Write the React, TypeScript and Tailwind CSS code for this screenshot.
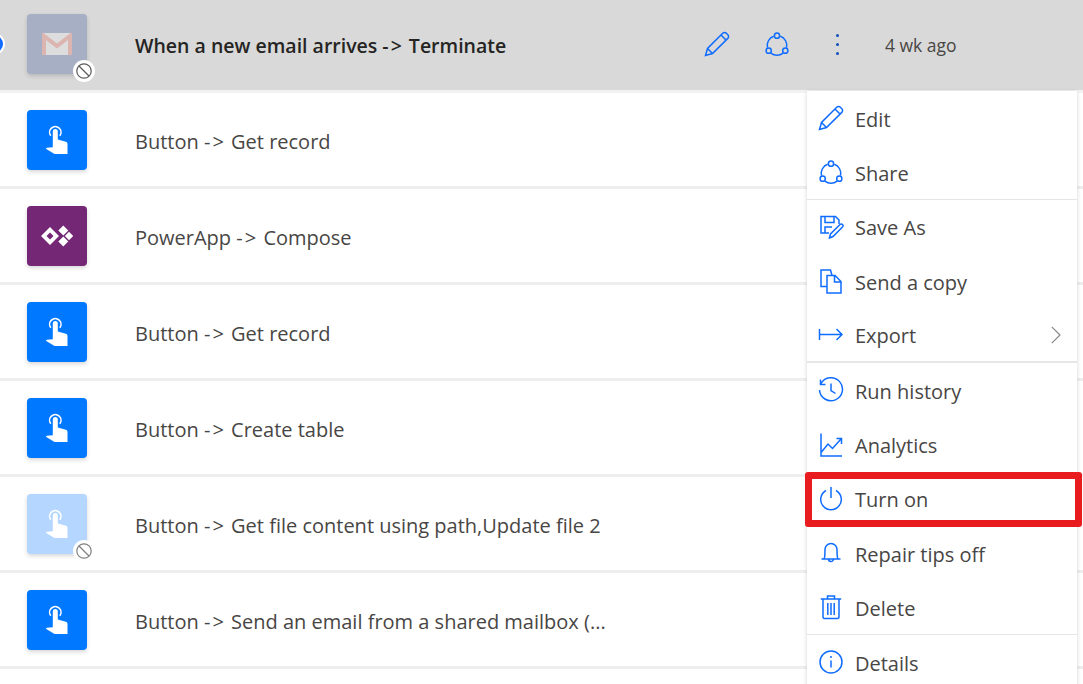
import React from 'react';

const font = "font-['Open_Sans','Noto_Sans',sans-serif]";

const HandIcon = () => (
  <svg width="22" height="30" viewBox="0 0 22 30">
    <path d="M4.800 10.800A5.700 5.700 0 1 1 13.800 10.800" fill="none" stroke="#fff" strokeWidth="1.600" />
    <path
      d="M6.800 6.500a2.500 2.500 0 0 1 5 0v8l8 2.300c1 .3 1.700 1.100 1.700 2.200V29H8.500L.3 24c-.5-.4-.2-1.200.5-1.300l6-.4z"
      fill="#fff"
    />
  </svg>
);

const PowerAppIcon = () => (
  <svg width="34" height="24" viewBox="0 0 34 24" fill="#fff">
    <path fillRule="evenodd" d="M10 3l9 9-9 9-9-9zm0 5.500L6.500 12l3.500 3.500 3.500-3.500z" />
    <path d="M23.300 1.500l5 5-5 5-5-5zM29 7.800l4.200 4.200-4.200 4.200-4.200-4.200zM23.300 12.500l5 5-5 5-5-5z" />
  </svg>
);

const GmailIcon = () => (
  <svg width="30" height="22" viewBox="0 0 30 22">
    <rect x="0" y="0" width="30" height="22" fill="#dddddd" />
    <path d="M2 22V3L15 13 28 3v19" fill="none" stroke="#dcb4b0" strokeWidth="4" />
  </svg>
);

const BanBadge = ({ muted }: { muted?: boolean }) => (
  <span className="absolute left-[46px] top-[46px] flex h-[22px] w-[22px] items-center justify-center rounded-full bg-white">
    <svg width="18" height="18" viewBox="0 0 18 18" fill="none" stroke={muted ? '#808080' : '#5a5a5a'} strokeWidth="1.200">
      <circle cx="9" cy="9" r="7.200" />
      <path d="M4 4l10 10" />
    </svg>
  </span>
);

const blue = '#0f6cff';

const Glyph = ({ children }: { children: React.ReactNode }) => (
  <svg width="26" height="26" viewBox="0 0 26 26" fill="none" stroke={blue} strokeWidth="1.500">
    {children}
  </svg>
);

const Pencil = () => (
  <Glyph>
    <path d="M1.500 24.500l2-7L18.700 2.300a2.600 2.600 0 0 1 3.700 0l1.400 1.400a2.600 2.600 0 0 1 0 3.700L8.500 22.500zM3.500 17.500l5 5M17 4l5 5" />
  </Glyph>
);

const Share = () => (
  <Glyph>
    <circle cx="13" cy="4.700" r="2.600" />
    <circle cx="4.700" cy="19.700" r="2.600" />
    <circle cx="21.300" cy="19.700" r="2.600" />
    <path d="M9.730 5.260A9.800 9.800 0 0 0 3.430 16.620M16.270 5.260A9.800 9.800 0 0 1 22.570 16.620M6.900 22.170A9.800 9.800 0 0 0 19.100 22.170" />
  </Glyph>
);

const menuItems: { label: string; icon: React.ReactNode; chevron?: boolean; divider?: boolean; thick?: boolean }[] = [
  { label: 'Edit', icon: <Pencil /> },
  { label: 'Share', icon: <Share />, divider: true },
  {
    label: 'Save As',
    icon: (
      <Glyph>
        <path d="M11 19H3V2.500h14.500L21 6v4" />
        <path d="M7 2.500v6h9v-6M7 19v-6h7" />
        <path d="M11.500 24l1-4 9.500-9.500a1.700 1.700 0 0 1 2.500 2.500L15 22.500z" />
      </Glyph>
    ),
  },
  {
    label: 'Send a copy',
    icon: (
      <Glyph>
        <path d="M9 18.500H3V2h9.500l1.500 5.500" />
        <path d="M9 7.500h8l6 6v11.500H9zM16.500 7.500v6.500h6.500" />
      </Glyph>
    ),
  },
  {
    label: 'Export',
    chevron: true,
    divider: true,
    thick: true,
    icon: (
      <Glyph>
        <path d="M1.500 7v11M1.500 12.500h22.500M18.500 7l5.500 5.500-5.500 5.500" />
      </Glyph>
    ),
  },
  {
    label: 'Run history',
    icon: (
      <Glyph>
        <path d="M3 6.500a11.500 11.500 0 1 1-1.500 6.500M2.500 2.500v5h5M13 6.500v7l4.500 3" />
      </Glyph>
    ),
  },
  {
    label: 'Analytics',
    icon: (
      <Glyph>
        <path d="M3 1.500v22.500h21M3.500 20l6.500-8 4.500 4.500 8.500-9.500M18.500 6.500h5V12" />
      </Glyph>
    ),
  },
  {
    label: 'Turn on',
    icon: (
      <Glyph>
        <path d="M8 4.500a10.300 10.300 0 1 0 10 0M13 1v11" />
      </Glyph>
    ),
  },
  {
    label: 'Repair tips off',
    icon: (
      <Glyph>
        <path d="M3.500 19h19M6 19c.8-1 1-3 1-9.500a6 6 0 0 1 12 0c0 6.500.2 8.500 1 9.500M10.500 19a2.500 2.500 0 0 0 5 0" />
      </Glyph>
    ),
  },
  {
    label: 'Delete',
    divider: true,
    icon: (
      <Glyph>
        <path d="M2.800 5h20.400M5 5v18a1.500 1.500 0 0 0 1.500 1.500h13A1.500 1.500 0 0 0 21 23V5M9.500 5V2h7v3M9.800 9v12M13 9v12M16.200 9v12" />
      </Glyph>
    ),
  },
  {
    label: 'Details',
    icon: (
      <Glyph>
        <circle cx="13" cy="13" r="11" />
        <path d="M13 11.500v7M13 7v2" />
      </Glyph>
    ),
  },
];

const rows = [
  { from: 'Button', to: 'Get record', kind: 'button' },
  { from: 'PowerApp', to: 'Compose', kind: 'power' },
  { from: 'Button', to: 'Get record', kind: 'button' },
  { from: 'Button', to: 'Create table', kind: 'button' },
  { from: 'Button', to: 'Get file content using path,Update file 2', kind: 'off' },
  { from: 'Button', to: 'Send an email from a shared mailbox (...', kind: 'button' },
];

// the arrow is wider in the reference font
const Arrow = () => <span className="tracking-[2px]">-&gt;</span>;

const FlowRow = ({ from, to, kind }: { from: string; to: string; kind: string }) => (
  <div className="flex h-[96px] shrink-0 items-center border-b-[3px] border-[#eeeeee] bg-white pl-[27px]">
    <div
      className={`relative flex h-[60px] w-[60px] items-center justify-center rounded-[4px] shadow-[0_2px_4px_rgba(0,0,0,0.16)] ${
        kind === 'power' ? 'bg-[#742774]' : kind === 'off' ? 'bg-[#b5d6ff]' : 'bg-[#0078ff]'
      }`}
    >
      {kind === 'power' ? <PowerAppIcon /> : <HandIcon />}
      {kind === 'off' && <BanBadge muted />}
    </div>
    <span className="ml-[48px] pt-1 text-[20px] text-[#484644]">
      {from} <Arrow /> {to}
    </span>
  </div>
);

export default function App() {
  return (
    <div className={`relative h-[684px] w-[1083px] overflow-hidden bg-white ${font}`}>
      {/* selected row */}
      <div className="relative flex h-[93px] items-center border-b-[3px] border-[#f2f2f2] bg-[#d9d9d9] pb-[2px] pl-[27px]">
        <span className="absolute left-[-17px] top-[33px] h-[22px] w-[22px] rounded-full border-[2px] border-white bg-[#0f6cff]" />
        <div className="relative flex h-[60px] w-[60px] items-center justify-center rounded-[4px] bg-[#a6afc4] shadow-[0_2px_4px_rgba(0,0,0,0.16)]">
          <GmailIcon />
          <BanBadge />
        </div>
        <span className="ml-[48px] flex-1 pt-1 text-[19.500px] font-semibold text-[#252423]">
          When a new email arrives <Arrow /> Terminate
        </span>
        <div className="flex h-[60px] w-[60px] items-center justify-center">
          <Pencil />
        </div>
        <div className="flex h-[60px] w-[60px] items-center justify-center">
          <Share />
        </div>
        <div className="flex h-[60px] w-[60px] flex-col items-center justify-center gap-[6px]">
          <span className="h-[3px] w-[3px] rounded-full bg-[#0f4fb8]" />
          <span className="h-[3px] w-[3px] rounded-full bg-[#0f4fb8]" />
          <span className="h-[3px] w-[3px] rounded-full bg-[#0f4fb8]" />
        </div>
        <span className="ml-[18px] w-[198px] pt-[2px] text-[17.500px] text-[#484644]">4 wk ago</span>
      </div>

      {rows.map((r, i) => (
        <FlowRow key={i} from={r.from} to={r.to} kind={r.kind} />
      ))}

      {/* context menu */}
      <div className="absolute left-[807px] top-[91px] w-[270px] bg-white shadow-[0_1px_4px_rgba(0,0,0,0.18)]">
        {menuItems.map((item) => (
          <div
            key={item.label}
            className={`flex h-[54.400px] items-center pl-[11px] ${
              item.divider ? (item.thick ? 'border-b-2 border-[#e6e6e6]' : 'border-b border-[#e6e6e6]') : ''
            }`}
          >
            <span className="flex w-[37px] shrink-0">{item.icon}</span>
            <span className="flex-1 pt-[3px] text-[20px] text-[#484644]">{item.label}</span>
            {item.chevron && (
              <svg className="mr-[16px]" width="10" height="18" viewBox="0 0 10 18" fill="none" stroke="#8a8886" strokeWidth="1.200">
                <path d="M.8.800 9 9 .8 17.200" />
              </svg>
            )}
          </div>
        ))}
      </div>

      {/* red annotation */}
      <div className="absolute left-[805px] top-[472px] h-[55px] w-[277px] rounded-[3px] border-[7px] border-[#e81c1f]" />
    </div>
  );
}
